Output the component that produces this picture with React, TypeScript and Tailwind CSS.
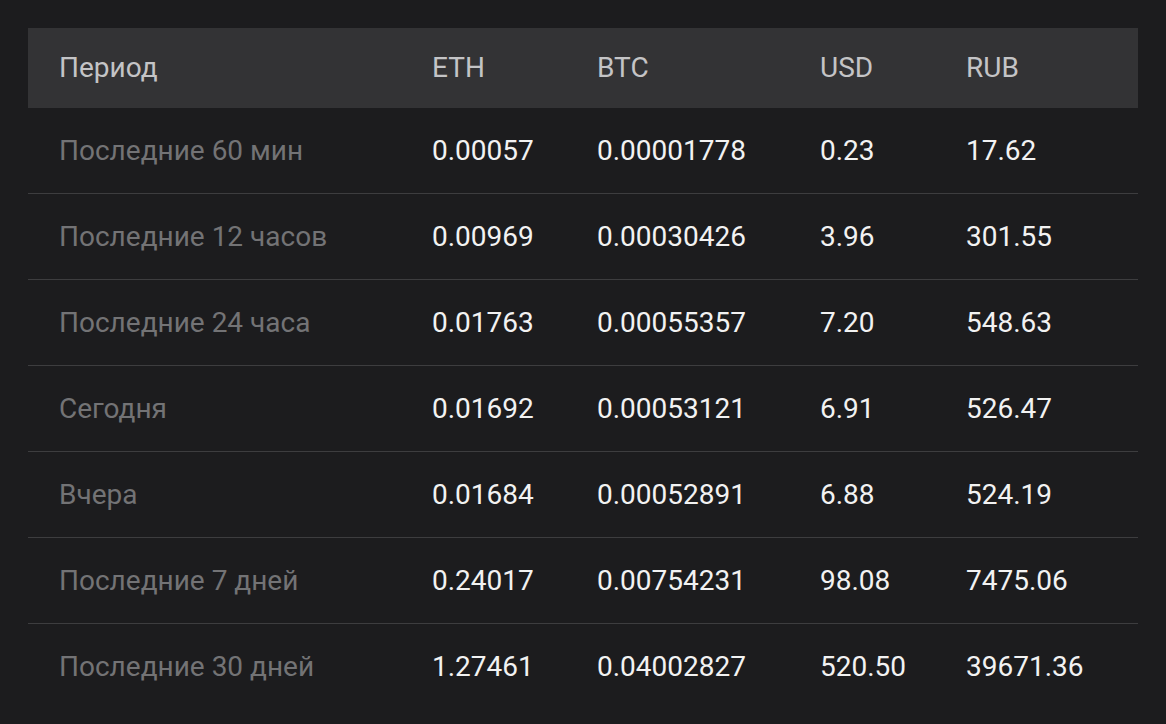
const rows = [
  { period: "Последние 60 мин", eth: "0.00057", btc: "0.00001778", usd: "0.23", rub: "17.62" },
  { period: "Последние 12 часов", eth: "0.00969", btc: "0.00030426", usd: "3.96", rub: "301.55" },
  { period: "Последние 24 часа", eth: "0.01763", btc: "0.00055357", usd: "7.20", rub: "548.63" },
  { period: "Сегодня", eth: "0.01692", btc: "0.00053121", usd: "6.91", rub: "526.47" },
  { period: "Вчера", eth: "0.01684", btc: "0.00052891", usd: "6.88", rub: "524.19" },
  { period: "Последние 7 дней", eth: "0.24017", btc: "0.00754231", usd: "98.08", rub: "7475.06" },
  { period: "Последние 30 дней", eth: "1.27461", btc: "0.04002827", usd: "520.50", rub: "39671.36" },
];

const gridCols = "grid grid-cols-[373px_165px_223px_146px_1fr] items-center px-[31px]";

export default function App() {
  return (
    <div
      className="min-h-[724px] w-full bg-[#1c1c1e] px-[28px] pt-[28px]"
      style={{ fontFamily: "Roboto, 'Noto Sans', sans-serif" }}
    >
      <div className="text-[28px] leading-none">
        <div className={`${gridCols} h-[80px] bg-[#333335] text-[#c4c4c6]`}>
          <div>Период</div>
          <div>ETH</div>
          <div>BTC</div>
          <div>USD</div>
          <div>RUB</div>
        </div>
        {rows.map((r, i) => (
          <div
            key={r.period}
            className={`${gridCols} h-[86px] ${
              i < rows.length - 1 ? "border-b border-[#3d3d3f]" : ""
            }`}
          >
            <div className="text-[#737375]">{r.period}</div>
            <div className="text-[#f2f2f2]">{r.eth}</div>
            <div className="text-[#f2f2f2]">{r.btc}</div>
            <div className="text-[#f2f2f2]">{r.usd}</div>
            <div className="text-[#f2f2f2]">{r.rub}</div>
          </div>
        ))}
      </div>
    </div>
  );
}
